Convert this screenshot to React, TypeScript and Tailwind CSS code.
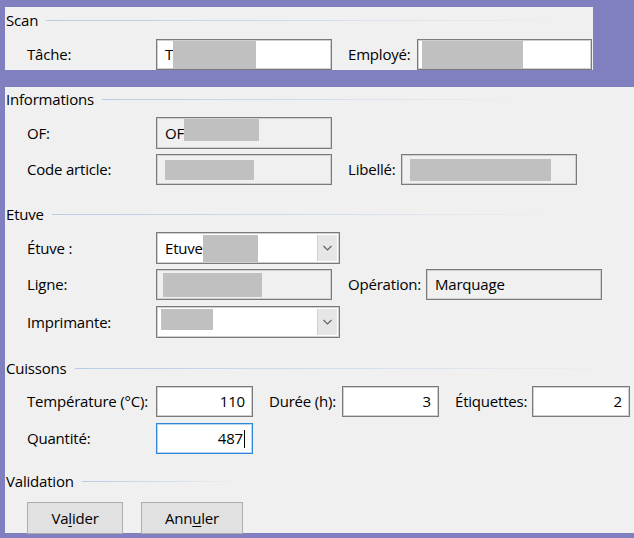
import type { ReactNode } from "react";

function Header({ title, line }: { title: string; line: string }) {
  return (
    <div className="flex h-[24px] items-center">
      <span className="pl-[1px] leading-none">{title}</span>
      <div className={`ml-[8px] h-px bg-linear-to-r from-[#b7cce6] to-transparent ${line}`} />
    </div>
  );
}

function Box({
  className,
  children,
  disabled,
  focused,
  right,
}: {
  className: string;
  children?: ReactNode;
  disabled?: boolean;
  focused?: boolean;
  right?: boolean;
}) {
  return (
    <div
      className={`flex items-center border ${
        focused
          ? "border-[#2f86d6] shadow-[inset_0_0_0_1px_#b6d5f0]"
          : "border-[#7a7a7a] shadow-[inset_0_0_0_1px_#cfcfcf]"
      } ${disabled ? "bg-[#f0f0f0]" : "bg-white"} ${
        right ? "justify-end pr-[7px]" : "pl-[8px]"
      } ${className}`}
    >
      {children}
    </div>
  );
}

function Combo({ children }: { children?: ReactNode }) {
  return (
    <div className="flex h-[32px] w-[184px] items-stretch border border-[#7a7a7a] bg-white shadow-[inset_0_0_0_1px_#cfcfcf]">
      <div className="flex flex-1 items-center pl-[8px]">{children}</div>
      <div className="my-[2px] mr-[2px] flex w-[20px] items-center justify-center border-l border-[#d0d0d0] bg-[#e6e6e6]">
        <svg width="9" height="6" viewBox="0 0 9 6">
          <path d="M0.5 1 L4.5 5 L8.5 1" fill="none" stroke="#606060" strokeWidth="1.1" />
        </svg>
      </div>
    </div>
  );
}

const Gray = ({ className }: { className: string }) => (
  <span className={`inline-block bg-[#c0c0c0] ${className}`} />
);

export default function App() {
  return (
    <div className="h-[538px] w-[634px] overflow-hidden bg-[#8080c0] font-['Open_Sans',sans-serif] text-[15px] tracking-[-0.2px] text-black">
      {/* Scan */}
      <div className="ml-[5px] mt-[7px] h-[63px] w-[588px] bg-[#f0f0f0]">
        <div className="pt-[1px]">
          <Header title="Scan" line="flex-1 mr-[10px]" />
        </div>
        <div className="mt-[7px] flex items-center">
          <div className="w-[151px] pl-[22px]">Tâche:</div>
          <Box className="h-[31px] w-[176px]">
            <span>T</span>
            <Gray className="h-[28px] w-[83px]" />
          </Box>
          <div className="ml-[16px] w-[69px]">Employé:</div>
          <Box className="h-[31px] w-[175px] !pl-[4px]">
            <Gray className="h-[28px] w-[101px]" />
          </Box>
        </div>
      </div>

      {/* Main panel */}
      <div className="ml-[5px] mt-[17px] h-[446px] w-[629px] bg-[#f0f0f0]">
        <Header title="Informations" line="flex-1 mr-[100px]" />

        <div className="mt-[6px] flex items-center">
          <div className="w-[151px] pl-[22px]">OF:</div>
          <Box disabled className="h-[32px] w-[176px] !items-start pt-[1px]">
            <span className="mt-[3px]">OF</span>
            <Gray className="h-[22px] w-[75px]" />
          </Box>
        </div>
        <div className="mt-[5px] flex items-center">
          <div className="w-[151px] pl-[22px]">Code article:</div>
          <Box disabled className="h-[31px] w-[176px]">
            <Gray className="h-[20px] w-[89px]" />
          </Box>
          <div className="ml-[16px] w-[53px]">Libellé:</div>
          <Box disabled className="h-[31px] w-[176px]">
            <Gray className="h-[22px] w-[141px]" />
          </Box>
        </div>

        <div className="mt-[17px]">
          <Header title="Etuve" line="flex-1 mr-[60px]" />
        </div>
        <div className="mt-[6px] flex items-center">
          <div className="w-[151px] pl-[22px]">Étuve :</div>
          <Combo>
            <span>Etuve</span>
            <Gray className="h-[27px] w-[55px]" />
          </Combo>
        </div>
        <div className="mt-[5px] flex items-center">
          <div className="w-[151px] pl-[22px]">Ligne:</div>
          <Box disabled className="h-[31px] w-[176px] !pl-[6px]">
            <Gray className="h-[24px] w-[99px]" />
          </Box>
          <div className="ml-[16px] w-[78px]">Opération:</div>
          <Box disabled className="h-[31px] w-[176px]">
            <span>Marquage</span>
          </Box>
        </div>
        <div className="mt-[6px] flex items-center">
          <div className="w-[151px] pl-[22px]">Imprimante:</div>
          <Combo>
            <Gray className="-ml-[4px] h-[21px] w-[52px] self-start mt-[2px]" />
          </Combo>
        </div>

        <div className="mt-[18px]">
          <Header title="Cuissons" line="flex-1 mr-[8px]" />
        </div>
        <div className="mt-[6px] flex items-center">
          <div className="w-[151px] pl-[22px]">Température (°C):</div>
          <Box right className="h-[31px] w-[97px]">
            110
          </Box>
          <div className="ml-[16px] w-[73px]">Durée (h):</div>
          <Box right className="h-[31px] w-[97px]">
            3
          </Box>
          <div className="ml-[16px] w-[77px]">Étiquettes:</div>
          <Box right className="h-[31px] w-[98px]">
            2
          </Box>
        </div>
        <div className="mt-[6px] flex items-center">
          <div className="w-[151px] pl-[22px]">Quantité:</div>
          <Box right focused className="h-[31px] w-[97px]">
            <span>487</span>
            <span className="ml-px inline-block h-[18px] w-px bg-black" />
          </Box>
        </div>

        <div className="mt-[15px]">
          <Header title="Validation" line="w-[160px]" />
        </div>
        <div className="mt-[9px] flex gap-[18px] pl-[22px]">
          <button className="h-[32px] w-[96px] border border-[#adadad] bg-[#e1e1e1]">
            Va<span className="underline underline-offset-2">l</span>ider
          </button>
          <button className="h-[32px] w-[102px] border border-[#adadad] bg-[#e1e1e1]">
            Ann<span className="underline underline-offset-2">u</span>ler
          </button>
        </div>
      </div>
    </div>
  );
}
